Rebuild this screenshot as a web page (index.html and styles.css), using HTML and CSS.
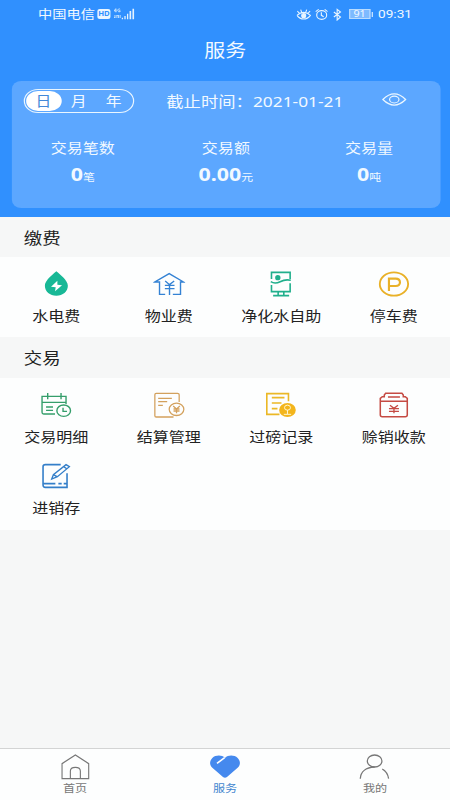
FILE: index.html
```html
<!DOCTYPE html>
<html lang="zh-CN">
<head>
<meta charset="utf-8">
<title>服务</title>
<link rel="stylesheet" href="styles.css">
</head>
<body>
<div class="app">
  <header class="header">
    <div class="status">
      <div class="status-left">
        <span class="carrier">中国电信</span>
        <span class="hd">HD</span>
        <svg class="signal" viewBox="0 0 66 39" preserveAspectRatio="none" fill="#e4f3ff">
          <path d="M5 2L1 9H8M6 2V13M19 4Q17 2 14 3Q11 5 12 9Q14 13 19 11V8H16M3 21V30L1 27M9 30V21L11 24M14 21V30M19 30V21" fill="none" stroke="#e4f3ff" stroke-width="2.4"/>
          <path d="M24 29h4v5h-4zM32 24h4v10h-4zM40 17h4v17h-4zM48 9h5v25h-5zM57 2h5v32h-5z"/>
        </svg>
      </div>
      <div class="status-right">
        <svg class="s-icon" viewBox="0 0 48 39" preserveAspectRatio="none" fill="none" stroke="#e8f5ff" stroke-width="3.4">
          <path d="M4 22Q13 13 24 13T44 22Q36 33 24 33T4 22M5 9l6 7M15 5l3 8M43 9l-6 7M33 5l-3 8"/><circle cx="24" cy="23" r="6" fill="#e8f5ff"/>
        </svg>
        <svg class="s-icon alarm" viewBox="0 0 42 39" preserveAspectRatio="none" fill="none" stroke="#e8f5ff" stroke-width="3.4">
          <ellipse cx="21" cy="21" rx="15" ry="13"/><path d="M20 13v9l7 4M3 11l9-7M39 11l-9-7"/>
        </svg>
        <svg class="s-icon bt" viewBox="0 0 30 39" preserveAspectRatio="none" fill="none" stroke="#e8f5ff" stroke-width="3.4">
          <path d="M4 12l20 15-10 9V4l10 8L4 27"/>
        </svg>
        <span class="battery">91</span><i class="battery-tip"></i>
        <span class="clock">09:31</span>
      </div>
    </div>
    <h1 class="title">服务</h1>
    <section class="card">
      <div class="card-top">
        <div class="segment"><span class="seg active">日</span><span class="seg">月</span><span class="seg">年</span></div>
        <div class="deadline">截止时间：2021-01-21</div>
        <svg class="eye" viewBox="0 0 78 48" preserveAspectRatio="none" fill="none" stroke="#eaf6ff" stroke-width="3.6">
          <path d="M5 24Q22 6 39 6T73 24Q56 42 39 42T5 24Z"/><ellipse cx="39" cy="24" rx="14" ry="11"/>
        </svg>
      </div>
      <div class="stats">
        <div class="stat"><div class="stat-label">交易笔数</div><div class="stat-value"><b>0</b>笔</div></div>
        <div class="stat"><div class="stat-label">交易额</div><div class="stat-value"><b>0.00</b>元</div></div>
        <div class="stat"><div class="stat-label">交易量</div><div class="stat-value"><b>0</b>吨</div></div>
      </div>
    </section>
  </header>

  <main class="content">
    <h2 class="section-title">缴费</h2>
    <div class="grid grid-pay">
      <div class="item">
        <svg class="icon" viewBox="0 0 96 84" preserveAspectRatio="none">
          <path fill="#18b896" d="M48 7C56 14 82.500 34 82.500 50C82.500 67 67 80 48 80S13.500 67 13.500 50C13.500 34 40 14 48 7Z"/>
          <path fill="#fff" d="M51 35L32 53L46 55L44 67L65 49L51 47Z"/>
        </svg>
        <span class="label">水电费</span>
      </div>
      <div class="item">
        <svg class="icon" viewBox="0 0 96 84" preserveAspectRatio="none" fill="none" stroke="#3482d4" stroke-width="4.200">
          <path d="M36 76H19V39H5L48 14L91 39H82V76H59"/><path d="M36 36L49 47L63 36M49 47V78M35 49H64M35 59H64"/>
        </svg>
        <span class="label">物业费</span>
      </div>
      <div class="item">
        <svg class="icon" viewBox="0 0 96 84" preserveAspectRatio="none" fill="none" stroke="#20af8c" stroke-width="4.800">
          <path d="M20 30V10H76V30M20 48V68H76V43M18 38Q30 46 46 38T78 34M40 68V80M57 68V80M25 80H73"/><circle cx="39" cy="26" r="8" fill="#20af8c" stroke="none"/>
        </svg>
        <span class="label">净化水自助</span>
      </div>
      <div class="item">
        <svg class="icon" viewBox="0 0 96 84" preserveAspectRatio="none" fill="none" stroke="#e9b128" stroke-width="5.500">
          <ellipse cx="49" cy="45" rx="42.500" ry="35"/><path stroke-width="6.500" d="M34 66V29H54Q67 29 67 40T54 51H34"/>
        </svg>
        <span class="label">停车费</span>
      </div>
    </div>

    <h2 class="section-title second">交易</h2>
    <div class="grid grid-trade">
      <div class="item">
        <svg class="icon" viewBox="0 0 96 84" preserveAspectRatio="none" fill="none" stroke="#359e6b" stroke-width="4.200">
          <path d="M44 72H10Q5 72 5 67V19H77V37H5M22 9V28M62 9V28M17 51H38M17 61H38M77 37V42"/><ellipse cx="70" cy="62" rx="20.500" ry="17"/><path d="M68 53V64H80"/>
        </svg>
        <span class="label">交易明细</span>
      </div>
      <div class="item">
        <svg class="icon" viewBox="0 0 96 84" preserveAspectRatio="none" fill="none" stroke="#d3a15d" stroke-width="3.800">
          <path d="M78 36V14Q78 10 73 10H9Q5 10 5 14V77Q5 81 9 81H61M15 25H56M15 35H42M15 46H29"/><ellipse cx="70" cy="58" rx="22" ry="18.500"/><path d="M60 48L70 57L80 48M70 57V70M61 57H79M61 63H79"/>
        </svg>
        <span class="label">结算管理</span>
      </div>
      <div class="item">
        <svg class="icon" viewBox="0 0 96 84" preserveAspectRatio="none" fill="none" stroke="#ebb826" stroke-width="4.800">
          <path d="M71 34V11H6V73H44M21 23H59M21 39H50M21 56H38"/><ellipse cx="68" cy="60" rx="25" ry="21" fill="#f3b51c" stroke="none"/><path stroke="#fff6cf" stroke-width="3" d="M68 60V72M57 73H79"/><ellipse cx="68" cy="53" rx="9" ry="7.500" stroke="#fff6cf" stroke-width="3"/>
        </svg>
        <span class="label">过磅记录</span>
      </div>
      <div class="item">
        <svg class="icon" viewBox="0 0 96 84" preserveAspectRatio="none" fill="none" stroke="#c54a43" stroke-width="4.600">
          <path d="M8 34V74Q8 80 14 80H83Q89 80 89 74V34ZM8 34V25L14 20H20V15L24 10H73L77 15V20H83L89 25V34M31 21H67"/><path d="M37 46L49 55L61 46M49 55V70M34 56H64M34 64H64" stroke-width="4"/>
        </svg>
        <span class="label">赊销收款</span>
      </div>
      <div class="item">
        <svg class="icon" viewBox="0 0 96 84" preserveAspectRatio="none" fill="none" stroke="#347fc9" stroke-width="4.800">
          <path d="M61 11H15Q8 11 8 17V72Q8 79 15 79H80V37M8 68H45M54 68H64M70 68H80"/><path d="M34 54L39 41L77 11L87 17L51 47ZM70 17L80 24M39 41L50 47" stroke-width="4"/>
        </svg>
        <span class="label">进销存</span>
      </div>
    </div>
  </main>

  <nav class="tabbar">
    <div class="tab">
      <svg class="tab-icon" viewBox="0 0 96 84" preserveAspectRatio="none" fill="none" stroke="#777" stroke-width="3.400">
        <path d="M8 77V32L48 6L88 32V77ZM33 77V54Q33 43 48 43T63 54V77"/>
      </svg>
      <span>首页</span>
    </div>
    <div class="tab current">
      <svg class="tab-icon" viewBox="0 0 96 84" preserveAspectRatio="none">
        <path fill="#4589ee" d="M48 15C38 5 20 6 10 15C1 24 1 36 10 44L42 72Q48 77 54 72L86 44C95 36 95 24 86 15C76 6 58 5 48 15Z"/><path d="M24 31L47 14" stroke="#fff" stroke-width="5"/>
      </svg>
      <span>服务</span>
    </div>
    <div class="tab">
      <svg class="tab-icon" viewBox="0 0 96 84" preserveAspectRatio="none" fill="none" stroke="#777" stroke-width="3.800">
        <ellipse cx="48" cy="24" rx="22" ry="18"/><path d="M5 77C6 55 23 43 48 42M71 48Q87 57 90 77"/>
      </svg>
      <span>我的</span>
    </div>
  </nav>
</div>
</body>
</html>
```
FILE: styles.css
```css
* {
  box-sizing: border-box;
}

html,
body {
  margin: 0;
  height: 100%;
  overflow: hidden;
}

/* Narrow layout stretched horizontally to fill the window. */
.app {
  width: calc(100% / 1.1875);
  height: 800px;
  display: flex;
  flex-direction: column;
  transform: scaleX(1.1875);
  transform-origin: 0 0;
  background: #f6f7f7;
  color: #222;
  font-family: "Noto Sans", "Noto Sans CJK SC", sans-serif;
}

.header {
  height: 217px;
  padding: 0 8px 0 9.500px;
  background: #3090fe;
  color: #f2f9ff;
}

.status {
  height: 28px;
  padding: 0 24px 0 22.500px;
  display: flex;
  justify-content: space-between;
  align-items: center;
  font-size: 11.500px;
  line-height: 28px;
}

.status-left,
.status-right {
  display: flex;
  align-items: center;
}

.carrier {
  padding-top: 1px;
  font-size: 12px;
}

.hd {
  width: 11px;
  height: 10px;
  margin: 0 3px 0 2px;
  border-radius: 2px;
  background: #eaf6ff;
  color: #3090fe;
  font-size: 6.500px;
  font-weight: 700;
  line-height: 10px;
  text-align: center;
}

.signal {
  width: 18px;
  height: 13px;
}

.s-icon {
  width: 13.500px;
  height: 13px;
}

.alarm {
  width: 11.800px;
  margin-left: 2.500px;
}

.bt {
  width: 8.400px;
  margin-left: 4px;
}

.battery {
  width: 18px;
  height: 10px;
  margin-left: 5px;
  border: 1px solid #b9dcff;
  background: #7dbaff;
  font-size: 9px;
  line-height: 8px;
  text-align: center;
}

.battery-tip {
  width: 1.500px;
  height: 5px;
  margin: 0 4px 0 1px;
  background: #d8edff;
}

.clock {
  font-family: Roboto, sans-serif;
  font-size: 11.500px;
}

.title {
  margin: 0;
  height: 53px;
  padding-top: 8px;
  font-size: 17.700px;
  font-weight: 400;
  line-height: 28px;
  text-align: center;
  text-indent: -1px;
}

.card {
  height: 127px;
  padding: 8px 0 0 10px;
  border-radius: 8px;
  background: #5ca7ff;
}

.card-top {
  display: flex;
  align-items: center;
  height: 24px;
}

.segment {
  width: 93px;
  height: 24px;
  padding: 1px;
  display: flex;
  border: 1px solid #eaf6ff;
  border-radius: 12px;
  font-size: 13.300px;
  line-height: 20px;
}

.seg {
  flex: 1;
  text-align: center;
}

.seg.active {
  flex: 0 0 30px;
  border-radius: 10px;
  background: #fff;
  color: #4389d8;
}

.deadline {
  width: 152px;
  margin-left: 27.500px;
  font-size: 14.600px;
  line-height: 24px;
  white-space: nowrap;
}

.eye {
  width: 22px;
  height: 15px;
  margin: -3px 0 0 28.500px;
}

.stats {
  display: flex;
  margin: 24px 0 0 -10px;
}

.stat {
  width: 121px;
  text-align: center;
}

.stat-label {
  font-size: 13.500px;
  line-height: 22px;
}

.stat-value {
  margin-top: 1px;
  font-size: 10px;
  line-height: 28px;
}

.stat-value b {
  font-size: 18px;
}

.content {
  flex: 1;
}

.section-title {
  margin: 0;
  height: 40px;
  padding-left: 20px;
  font-size: 15.500px;
  font-weight: 400;
  line-height: 42px;
}

.section-title.second {
  height: 41px;
  line-height: 43px;
}

.grid {
  display: grid;
  grid-template-columns: repeat(4, 1fr);
  grid-auto-rows: 71px;
  padding-top: 12px;
  background: #fdfefe;
}

.grid-pay {
  height: 80px;
}

.grid-trade {
  height: 152px;
}

.item {
  display: flex;
  flex-direction: column;
  align-items: center;
}

.icon {
  width: 26.950px;
  height: 28px;
}

.label {
  margin-top: 9px;
  font-size: 13.500px;
  line-height: 20px;
  white-space: nowrap;
}

.tabbar {
  height: 52px;
  display: flex;
  border-top: 1px solid #d3d4d4;
  background: #fdfefe;
  color: #777;
}

.tab {
  flex: 1;
  padding-top: 4px;
  display: flex;
  flex-direction: column;
  align-items: center;
  font-size: 10.200px;
  line-height: 14px;
}

.tab-icon {
  width: 26.950px;
  height: 28px;
}

.tab.current {
  color: #4386cf;
}
```
